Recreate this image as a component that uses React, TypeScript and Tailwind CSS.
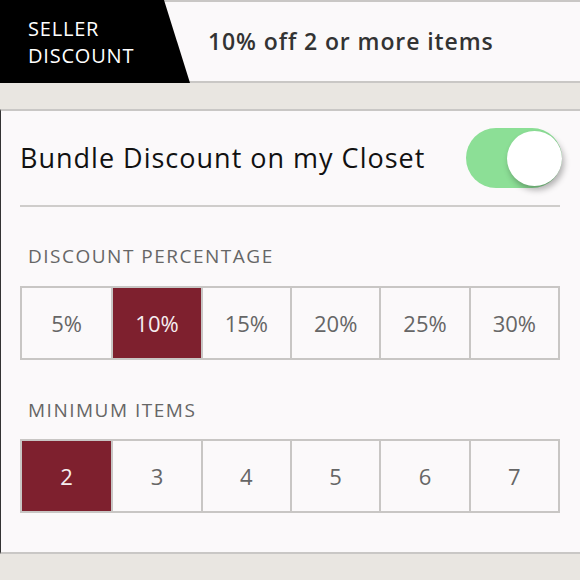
import React from "react";

const percents = ["5%", "10%", "15%", "20%", "25%", "30%"];
const minItems = ["2", "3", "4", "5", "6", "7"];

type OptionRowProps = {
  options: string[];
  selected: string;
};

const OptionRow: React.FC<OptionRowProps> = ({ options, selected }) => {
  return (
    <div className="grid grid-cols-6 h-[74px] border-2 border-[#c8c6c4]">
      {options.map((opt, i) => (
        <div
          key={opt}
          className={`flex items-center justify-center text-[22px] ${
            i > 0 ? "border-l-2 border-[#c8c6c4]" : ""
          } ${opt === selected ? "bg-[#7e202e] text-[#f6eef0]" : "text-[#666]"}`}
        >
          {opt}
        </div>
      ))}
    </div>
  );
};

const App: React.FC = () => {
  return (
    <div
      className="w-[580px] h-[580px] overflow-hidden bg-[#e9e6e1] text-[#111]"
      style={{ fontFamily: "'Open Sans', Lato, sans-serif" }}
    >
      <div className="flex h-[83px] bg-[#fbf9fa] border-t-2 border-b-2 border-[#c9c7c5]">
        <div className="w-[190px] -mt-[2px] -mb-[2px] bg-black text-white text-[20px] leading-[27px] tracking-[0.8px] pl-[28px] flex flex-col justify-center [clip-path:polygon(0_0,164px_0,190px_100%,0_100%)]">
          <span>SELLER</span>
          <span>DISCOUNT</span>
        </div>
        <div className="flex items-center ml-[18px] text-[23px] tracking-[0.9px] font-semibold text-[#333]">
          10% off 2 or more items
        </div>
      </div>

      <div className="h-[26px]" />

      <div className="bg-[#fbf9fa] border-t-2 border-b-2 border-[#c9c7c5] border-l border-l-[#333] pl-[19px] pr-[20px] h-[445px]">
        <div className="flex items-center justify-between h-[96px] border-b-2 border-[#cfcdcb]">
          <span className="text-[27px] tracking-[1px]">Bundle Discount on my Closet</span>
          <div className="w-[96px] h-[60px] rounded-full bg-[#8cdf96] flex items-center justify-end -mr-[2px]">
            <div className="w-[55px] h-[55px] rounded-full bg-white shadow-[2px_4px_6px_rgba(0,0,0,0.3)]" />
          </div>
        </div>

        <div className="mt-[37px] pl-[8px] text-[19px] leading-[24px] tracking-[1.5px] text-[#666]">
          DISCOUNT PERCENTAGE
        </div>
        <div className="mt-[18px]">
          <OptionRow options={percents} selected="10%" />
        </div>

        <div className="mt-[38px] pl-[8px] text-[19px] leading-[24px] tracking-[1.5px] text-[#666]">
          MINIMUM ITEMS
        </div>
        <div className="mt-[17px]">
          <OptionRow options={minItems} selected="2" />
        </div>
      </div>
    </div>
  );
};

export default App;
